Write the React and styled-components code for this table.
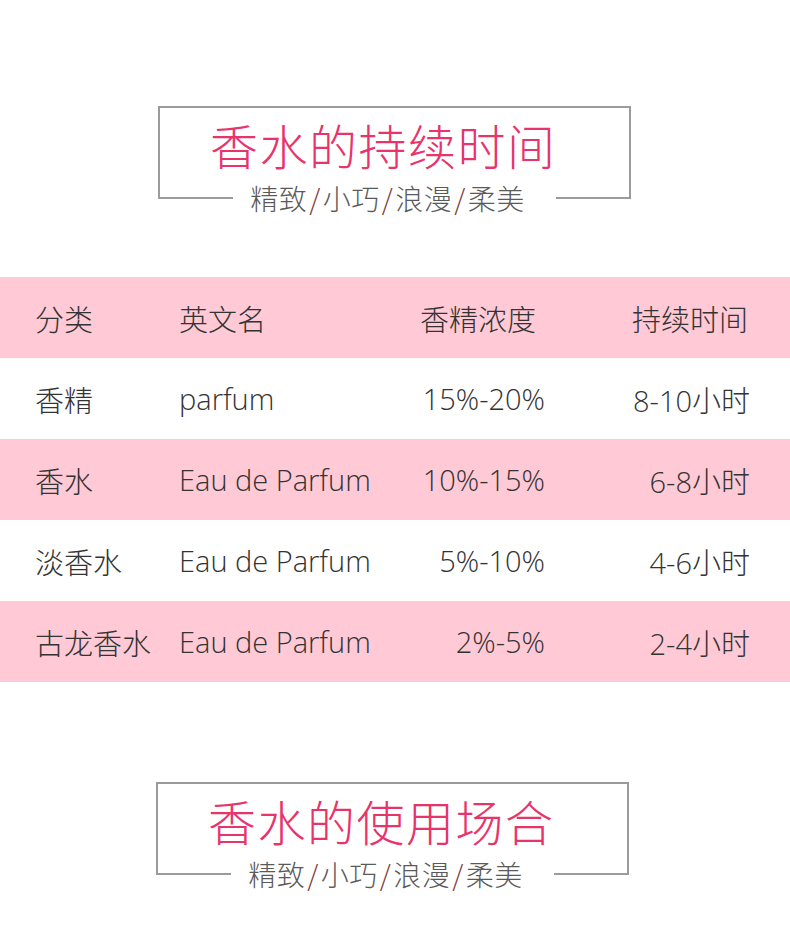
import React from "react";
import styled, { createGlobalStyle } from "styled-components";

const GlobalStyle = createGlobalStyle`
  html, body {
    margin: 0;
    padding: 0;
    background: #fff;
  }
  body {
    font-family: "Open Sans", "Noto Sans CJK SC", sans-serif;
    font-weight: 300;
    color: #333;
  }
`;

const Page = styled.div`
  width: 790px;
  height: 943px;
  overflow: hidden;
  background: #fff;
`;

const Frame = styled.div`
  width: 473px;
  box-sizing: border-box;
  margin-left: ${p => p.left}px;
  margin-top: ${p => p.top}px;
`;

const FrameBody = styled.div`
  border: 2px solid #9b9b9b;
  border-bottom: none;
  padding: 9px 0 26px 50px;
`;

const Title = styled.h2`
  margin: 0;
  font-family: "Noto Sans CJK SC", sans-serif;
  font-weight: 300;
  font-size: 48px;
  line-height: 54px;
  letter-spacing: 1.5px;
  color: #e8336b;
  white-space: nowrap;
`;

const BottomRow = styled.div`
  display: flex;
  align-items: center;
  height: 2px;
`;

const Line = styled.div`
  flex: 1;
  height: 2px;
  background: #9b9b9b;
`;

const Sub = styled.div`
  margin: 0 31px 0 17px;
  font-family: "Noto Sans CJK SC", sans-serif;
  font-weight: 300;
  font-size: 28px;
  line-height: 34px;
  letter-spacing: 0.5px;
  color: #5a5a5a;
  white-space: nowrap;
`;

const Slash = styled.span`
  color: #7d3a3a;
  margin: 0 2px;
`;

const Table = styled.div`
  margin-top: 78px;
`;

const Row = styled.div`
  display: grid;
  grid-template-columns: 144px 206px 160px 205px;
  align-items: center;
  height: 81px;
  padding: 0 40px 0 35px;
  background: ${p => (p.pink ? "#ffc9d6" : "#fff")};
  font-size: 29px;
  color: #333;
`;

const Cell = styled.div`
  white-space: nowrap;
  text-align: ${p => p.align || "left"};
  padding-right: ${p => p.pr || 0}px;
`;

const Heading = ({ title, left, top }) => (
  <Frame left={left} top={top}>
    <FrameBody>
      <Title>{title}</Title>
    </FrameBody>
    <BottomRow>
      <Line />
      <Sub>
        精致<Slash>/</Slash>小巧<Slash>/</Slash>浪漫<Slash>/</Slash>柔美
      </Sub>
      <Line />
    </BottomRow>
  </Frame>
);

const rows = [
  ["香精", "parfum", "15%-20%", "8-10小时"],
  ["香水", "Eau de Parfum", "10%-15%", "6-8小时"],
  ["淡香水", "Eau de Parfum", "5%-10%", "4-6小时"],
  ["古龙香水", "Eau de Parfum", "2%-5%", "2-4小时"]
];

const App = () => (
  <Page>
    <GlobalStyle />
    <Heading title="香水的持续时间" left={158} top={106} />
    <Table>
      <Row pink>
        <Cell>分类</Cell>
        <Cell>英文名</Cell>
        <Cell align="right" pr={9}>
          香精浓度
        </Cell>
        <Cell align="right" pr={2}>
          持续时间
        </Cell>
      </Row>
      {rows.map((r, i) => (
        <Row key={r[0]} pink={i % 2 === 1}>
          <Cell>{r[0]}</Cell>
          <Cell>{r[1]}</Cell>
          <Cell align="right">{r[2]}</Cell>
          <Cell align="right">{r[3]}</Cell>
        </Row>
      ))}
    </Table>
    <Heading title="香水的使用场合" left={156} top={100} />
  </Page>
);

export default App;
